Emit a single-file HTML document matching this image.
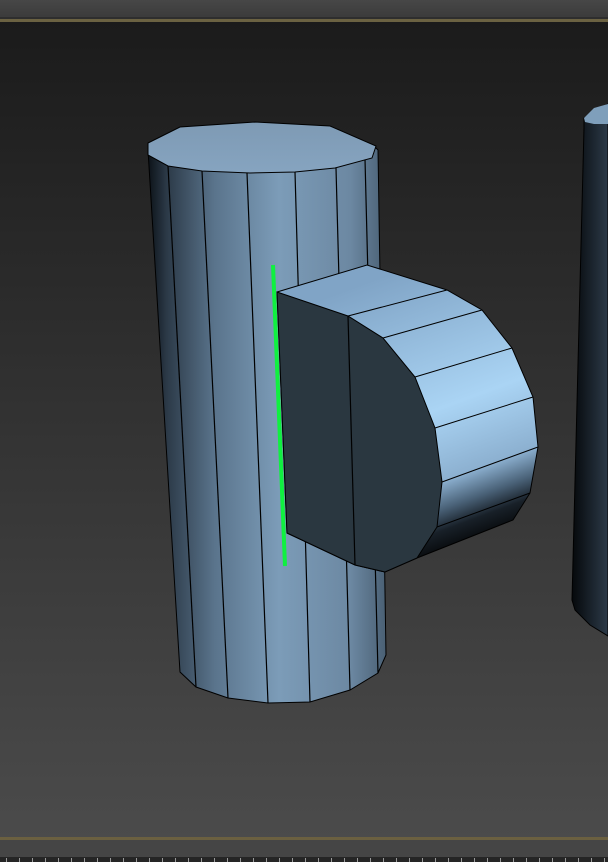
<!DOCTYPE html>
<html><head><style>
html,body{margin:0;padding:0;width:608px;height:862px;overflow:hidden;background:#444}
</style></head><body>
<svg width="608" height="862" viewBox="0 0 608 862" xmlns="http://www.w3.org/2000/svg" style="display:block">
<defs>
<linearGradient id="bg" x1="0" y1="21" x2="0" y2="838" gradientUnits="userSpaceOnUse">
<stop offset="0" stop-color="#1b1b1b"/><stop offset="1" stop-color="#4b4b4b"/></linearGradient>
<linearGradient id="top" x1="0" y1="0" x2="0" y2="19" gradientUnits="userSpaceOnUse">
<stop offset="0" stop-color="#474747"/><stop offset="1" stop-color="#3a3a3a"/></linearGradient>
<linearGradient id="body" x1="148" y1="0" x2="386" y2="0" gradientUnits="userSpaceOnUse">
<stop offset="0" stop-color="#0c1218"/><stop offset="0.08" stop-color="#2c3a48"/><stop offset="0.28" stop-color="#5a748c"/><stop offset="0.55" stop-color="#7c9cb8"/><stop offset="0.85" stop-color="#6c88a2"/><stop offset="1" stop-color="#4a6074"/></linearGradient>
<linearGradient id="cap" x1="0" y1="122" x2="0" y2="173" gradientUnits="userSpaceOnUse">
<stop offset="0" stop-color="#7e9ab4"/><stop offset="1" stop-color="#86a4c0"/></linearGradient>
<linearGradient id="br" x1="400" y1="270" x2="500" y2="540" gradientUnits="userSpaceOnUse">
<stop offset="0" stop-color="#80a4c6"/><stop offset="0.5" stop-color="#aad4f4"/><stop offset="0.74" stop-color="#8cb0d0"/><stop offset="0.83" stop-color="#4a6278"/><stop offset="0.9" stop-color="#182028"/><stop offset="1" stop-color="#000"/></linearGradient>
<linearGradient id="rc" x1="572" y1="0" x2="608" y2="0" gradientUnits="userSpaceOnUse">
<stop offset="0" stop-color="#05080b"/><stop offset="1" stop-color="#2c3a48"/></linearGradient>
</defs>
<rect width="608" height="862" fill="#444"/>
<rect width="608" height="19" fill="url(#top)"/>
<rect y="17" width="608" height="2" fill="#2e2e2e"/>
<rect y="19" width="608" height="3" fill="#6b6242"/>
<rect y="22" width="608" height="815" fill="url(#bg)"/>
<rect y="837" width="608" height="3" fill="#6b6040"/>
<rect y="840" width="608" height="17" fill="#454545"/>
<rect y="857" width="608" height="5" fill="#252525"/>
<g fill="#9a9a9a">
<rect x="6" y="858" width="1" height="4"/><rect x="19" y="858" width="1" height="4"/><rect x="32" y="858" width="1" height="4"/><rect x="45" y="858" width="1" height="4"/><rect x="58" y="858" width="1" height="4"/><rect x="71" y="858" width="1" height="4"/><rect x="84" y="858" width="1" height="4"/><rect x="97" y="858" width="1" height="4"/><rect x="110" y="858" width="1" height="4"/><rect x="123" y="858" width="1" height="4"/><rect x="136" y="858" width="1" height="4"/><rect x="149" y="858" width="1" height="4"/><rect x="162" y="858" width="1" height="4"/><rect x="175" y="858" width="1" height="4"/><rect x="188" y="858" width="1" height="4"/><rect x="201" y="858" width="1" height="4"/><rect x="214" y="858" width="1" height="4"/><rect x="227" y="858" width="1" height="4"/><rect x="240" y="858" width="1" height="4"/><rect x="253" y="858" width="1" height="4"/><rect x="266" y="858" width="1" height="4"/><rect x="279" y="858" width="1" height="4"/><rect x="292" y="858" width="1" height="4"/><rect x="305" y="858" width="1" height="4"/><rect x="318" y="858" width="1" height="4"/><rect x="331" y="858" width="1" height="4"/><rect x="344" y="858" width="1" height="4"/><rect x="357" y="858" width="1" height="4"/><rect x="370" y="858" width="1" height="4"/><rect x="383" y="858" width="1" height="4"/><rect x="396" y="858" width="1" height="4"/><rect x="409" y="858" width="1" height="4"/><rect x="422" y="858" width="1" height="4"/><rect x="435" y="858" width="1" height="4"/><rect x="448" y="858" width="1" height="4"/><rect x="461" y="858" width="1" height="4"/><rect x="474" y="858" width="1" height="4"/><rect x="487" y="858" width="1" height="4"/><rect x="500" y="858" width="1" height="4"/><rect x="513" y="858" width="1" height="4"/><rect x="526" y="858" width="1" height="4"/><rect x="539" y="858" width="1" height="4"/><rect x="552" y="858" width="1" height="4"/><rect x="565" y="858" width="1" height="4"/><rect x="578" y="858" width="1" height="4"/><rect x="591" y="858" width="1" height="4"/><rect x="604" y="858" width="1" height="4"/>
</g>

<polygon points="584,118 608,104 608,636 590,625 575,610 572,600 584,128" fill="url(#rc)" stroke="#000" stroke-width="1"/>
<polygon points="584,118 594,108 608,104 608,124 594,124 585,122" fill="#7f9fbb"/>

<polygon points="148,150 376,148 378,150 386,655 378,673 350,690 310,702 268,703 228,698 196,687 180,672" fill="url(#body)" stroke="#000" stroke-width="1"/>
<g stroke="#000" stroke-width="1.2" fill="none">
<line x1="168" y1="166" x2="196" y2="687"/>
<line x1="202" y1="171" x2="228" y2="698"/>
<line x1="247" y1="173" x2="268" y2="703"/>
<line x1="295" y1="172" x2="310" y2="702"/>
<line x1="336" y1="168" x2="350" y2="690"/>
<line x1="365" y1="159" x2="378" y2="673"/>
</g>
<polygon points="148,143 180,127 255,122 330,126 376,146 372,158 335,168 295,172 250,173 202,171 168,166 148,155" fill="url(#cap)" stroke="#000" stroke-width="1"/>

<polygon points="277,292 367,265 447,290 482,310 512,348 533,397 538,447 530,493 513,520 417,558 385,572 355,565 287,533" fill="url(#br)" stroke="#000" stroke-width="1"/>
<g stroke="#000" stroke-width="1" fill="none">
<line x1="348" y1="316" x2="447" y2="290"/>
<line x1="383" y1="338" x2="482" y2="310"/>
<line x1="415" y1="377" x2="512" y2="348"/>
<line x1="435" y1="428" x2="533" y2="397"/>
<line x1="442" y1="482" x2="538" y2="447"/>
<line x1="437" y1="527" x2="530" y2="493"/>
</g>
<polygon points="277,292 348,316 383,338 415,377 435,428 442,482 437,527 417,558 385,572 355,565 287,533" fill="#2a3740" stroke="#000" stroke-width="1"/>
<line x1="348" y1="316" x2="355" y2="565" stroke="#000" stroke-width="1.2"/>

<line x1="273" y1="265" x2="285" y2="566" stroke="#10f040" stroke-width="4"/>
</svg>
</body></html>
